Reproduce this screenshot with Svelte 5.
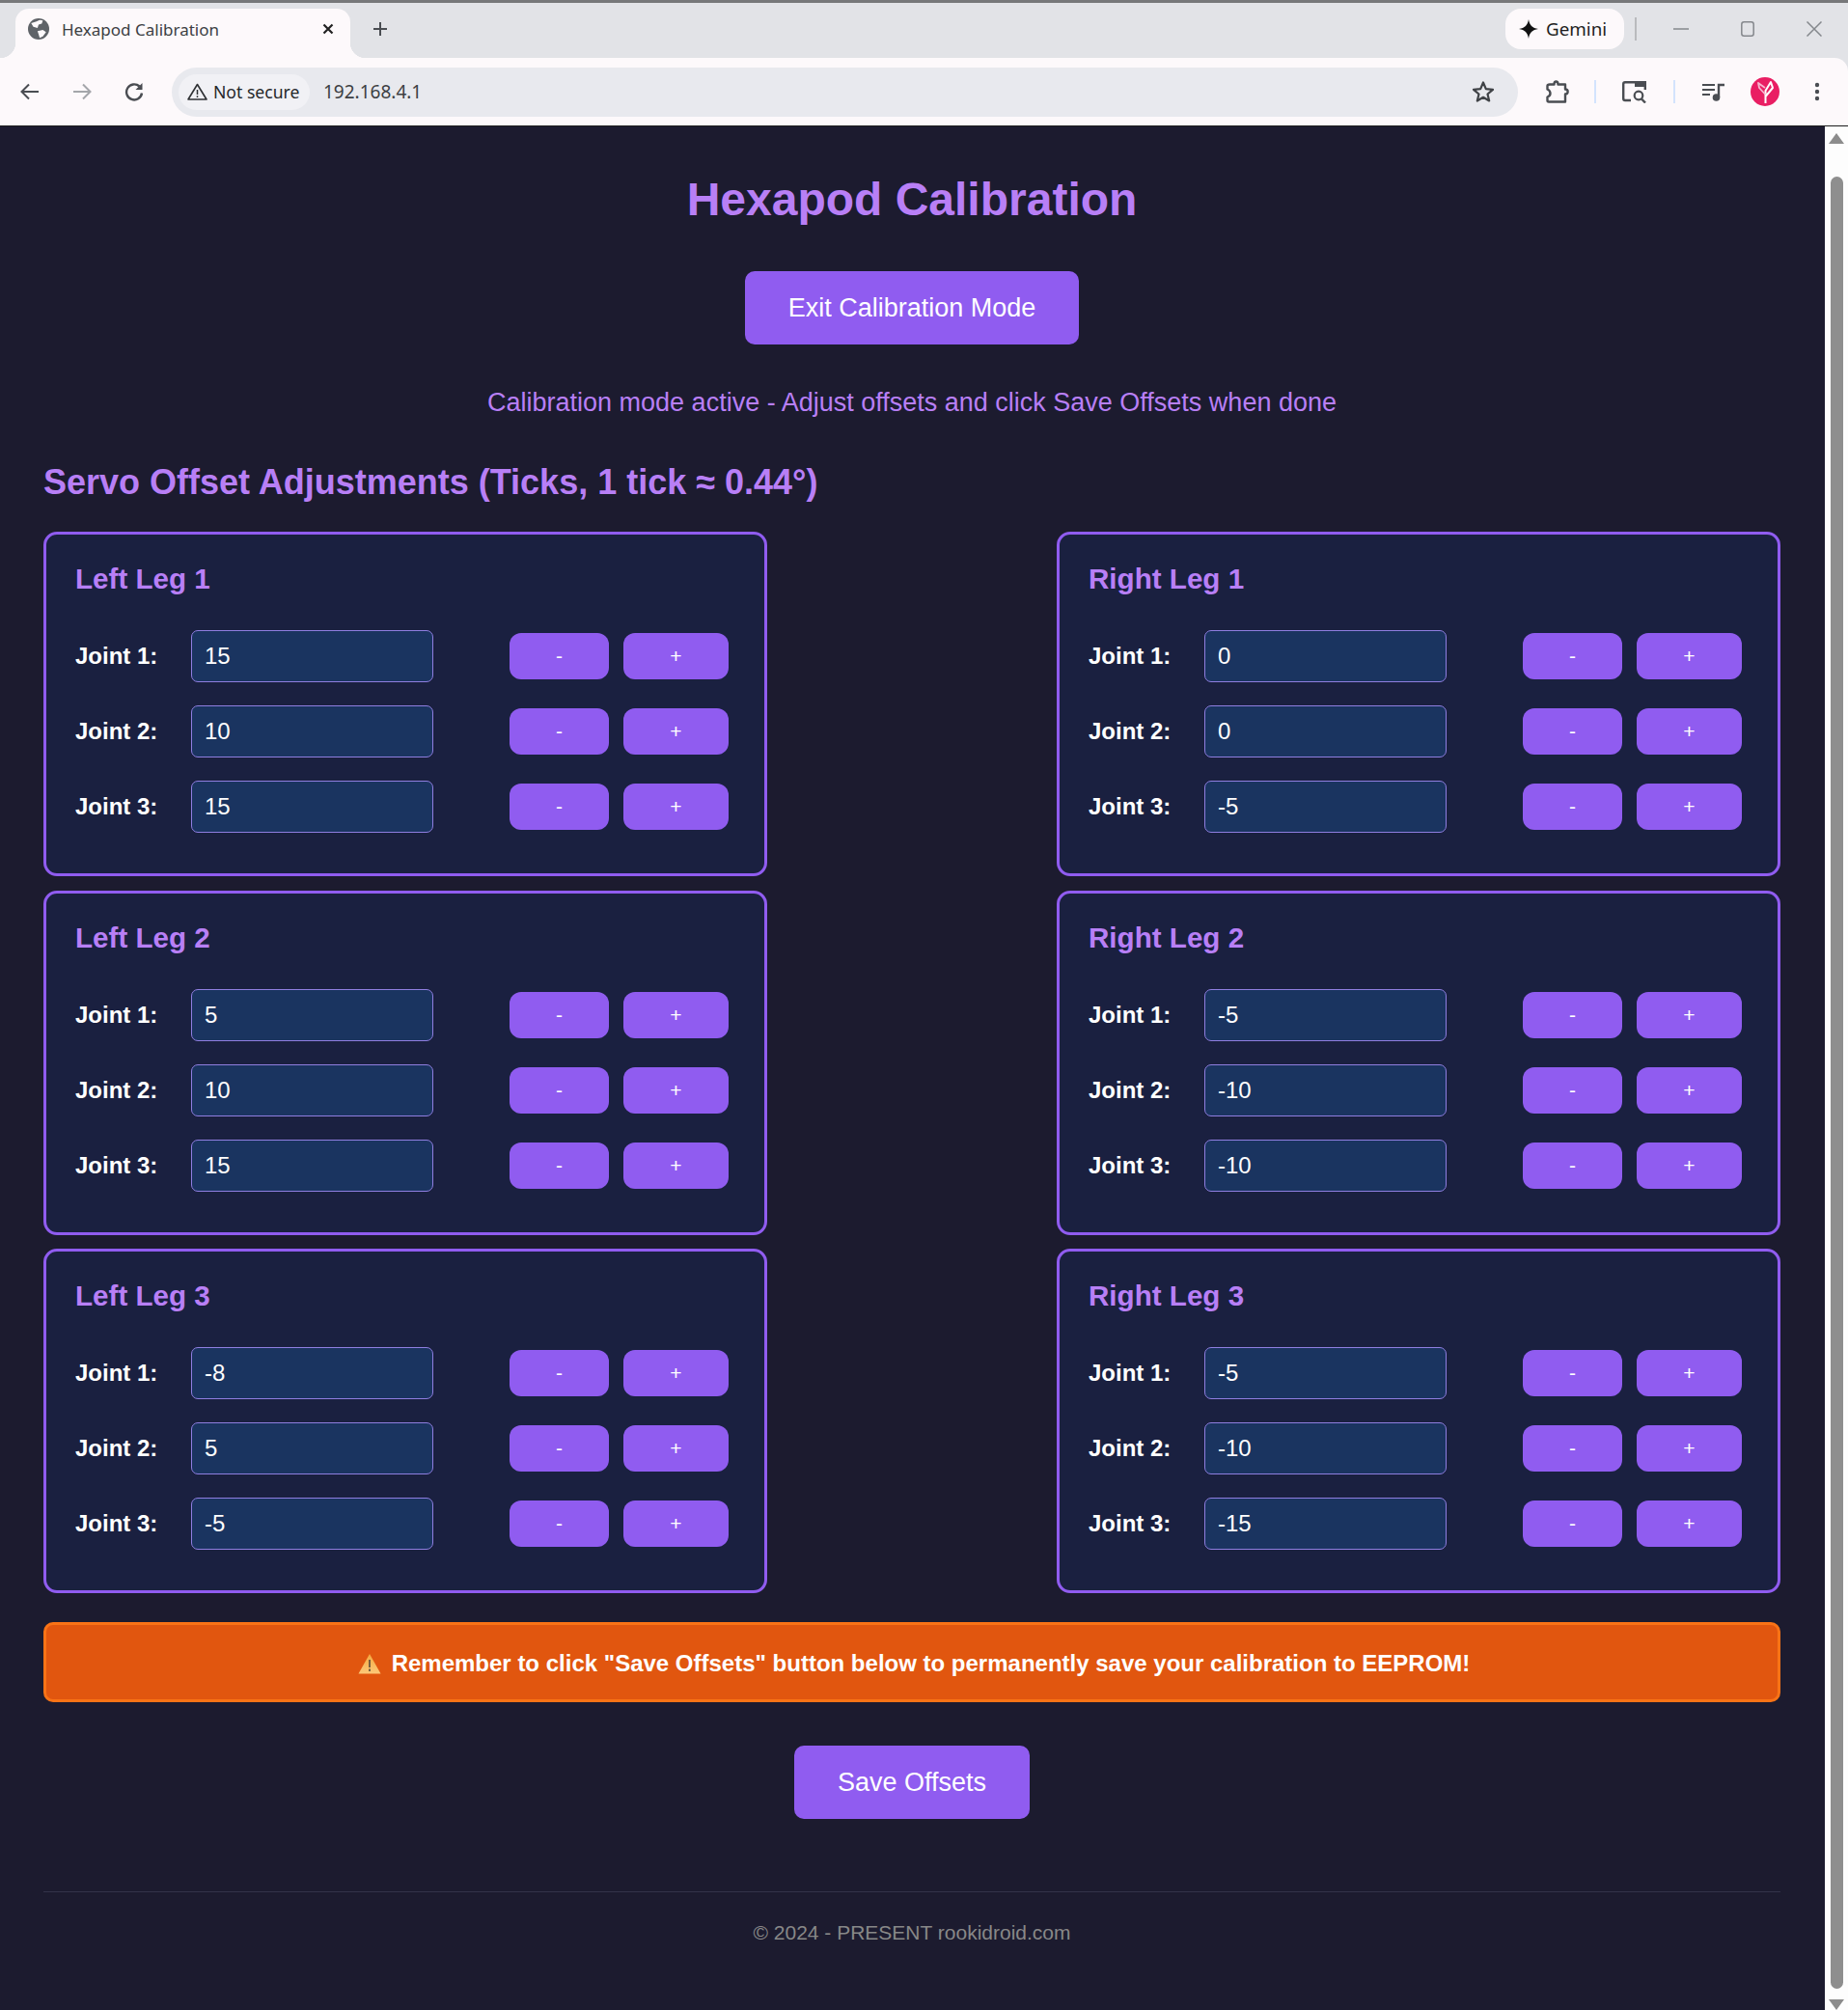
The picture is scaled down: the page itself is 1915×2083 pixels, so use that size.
<script>
  const legs = [
    { side: "Left", n: 1, vals: [15, 10, 15] },
    { side: "Right", n: 1, vals: [0, 0, -5] },
    { side: "Left", n: 2, vals: [5, 10, 15] },
    { side: "Right", n: 2, vals: [-5, -10, -10] },
    { side: "Left", n: 3, vals: [-8, 5, -5] },
    { side: "Right", n: 3, vals: [-5, -10, -15] }
  ];
</script>

<div class="window">
  <div class="topline"></div>
  <div class="tabstrip">
    <div class="tab">
      <svg class="globe" width="22" height="22" viewBox="0 0 20 20">
        <circle cx="10" cy="10" r="10" fill="#5f6368" />
        <path d="M3 4.5 L8 3 L11 1.5 L14 2 L13 5 L10 6 L9 9 L5 8 Z" fill="#fdf9fb" />
        <path d="M9 12 L14 11 L17 13 L14 17 L11 18.5 L10 15 Z" fill="#fdf9fb" />
      </svg>
      <span class="tabtitle">Hexapod Calibration</span>
      <svg class="tabclose" width="12" height="12" viewBox="0 0 12 12">
        <path d="M1.5 1.5 L10.5 10.5 M10.5 1.5 L1.5 10.5" stroke="#222" stroke-width="2.2" />
      </svg>
    </div>
    <svg class="newtab" width="16" height="16" viewBox="0 0 16 16">
      <path d="M8 1 V15 M1 8 H15" stroke="#4a4d52" stroke-width="2" />
    </svg>
    <div class="spacer"></div>
    <div class="gemini">
      <svg width="20" height="20" viewBox="0 0 20 20">
        <path d="M10 0 C10.8 6 14 9.2 20 10 C14 10.8 10.8 14 10 20 C9.2 14 6 10.8 0 10 C6 9.2 9.2 6 10 0 Z" fill="#111" />
      </svg>
      <span>Gemini</span>
    </div>
    <div class="stripsep"></div>
    <svg class="minimize" width="16" height="16" viewBox="0 0 16 16"><path d="M0 8 H16" stroke="#85888d" stroke-width="1.5" /></svg>
    <svg class="maximize" width="14" height="16" viewBox="0 0 14 16"><rect x="0.8" y="0.8" width="12.4" height="14.4" rx="2.5" fill="none" stroke="#85888d" stroke-width="1.5" /></svg>
    <svg class="winclose" width="16" height="16" viewBox="0 0 16 16"><path d="M0.5 0.5 L15.5 15.5 M15.5 0.5 L0.5 15.5" stroke="#85888d" stroke-width="1.5" /></svg>
  </div>

  <div class="toolbar">
    <svg class="back" width="20" height="18" viewBox="0 0 20 18"><path d="M19 9 H2 M9 1.5 L1.5 9 L9 16.5" fill="none" stroke="#4a4d52" stroke-width="2" /></svg>
    <svg class="forward" width="20" height="18" viewBox="0 0 20 18"><path d="M1 9 H18 M11 1.5 L18.5 9 L11 16.5" fill="none" stroke="#a4a6aa" stroke-width="2" /></svg>
    <svg class="reload" width="20" height="20" viewBox="0 0 20 20"><path d="M15.5 4.5 A8 8 0 1 0 18 11.5" fill="none" stroke="#4a4d52" stroke-width="2.4" /><path d="M18.5 1 V8 H11.5 Z" fill="#4a4d52" /></svg>
    <div class="omnibox">
      <div class="chip">
        <svg width="21" height="18" viewBox="0 0 21 18">
          <path d="M10.5 1.5 L20 17 H1 Z" fill="none" stroke="#2f3134" stroke-width="1.6" stroke-linejoin="round" />
          <path d="M10.5 7 V12 M10.5 13.2 V15" stroke="#2f3134" stroke-width="1.5" />
        </svg>
        <span>Not secure</span>
      </div>
      <span class="url">192.168.4.1</span>
      <div class="spacer"></div>
      <svg class="star" width="24" height="24" viewBox="0 0 24 24"><path d="M12 2.5 L14.8 9.2 L22 9.8 L16.5 14.5 L18.2 21.5 L12 17.8 L5.8 21.5 L7.5 14.5 L2 9.8 L9.2 9.2 Z" fill="none" stroke="#3f4246" stroke-width="2.2" stroke-linejoin="round" /></svg>
    </div>
    <svg class="ext" width="24" height="24" viewBox="0 0 24 24"><path d="M4 4.5 H8.5 C8.5 0.5 12.5 0.5 12.5 4.5 H20 V9.5 C23.5 9.5 23.5 14.5 20 14.5 V22.5 H3 C2 22.5 1.5 22 1.5 21 V17.5 C5.5 16 5.5 11.5 1.5 9.5 V6 C1.5 5 2.5 4.5 4 4.5 Z" fill="none" stroke="#4a4d52" stroke-width="2.4" stroke-linejoin="round" /></svg>
    <div class="toolsep"></div>
    <svg class="tabsearch" width="26" height="23" viewBox="0 0 26 23">
      <path d="M14 1.2 H3 Q1.2 1.2 1.2 3 V18 Q1.2 20 3 20 H9" fill="none" stroke="#4a4d52" stroke-width="2.4" />
      <path d="M13 0 H25 V6 H13 Z" fill="#4a4d52" />
      <path d="M23.8 6 V9" stroke="#4a4d52" stroke-width="2.4" />
      <circle cx="17" cy="15" r="4.3" fill="none" stroke="#4a4d52" stroke-width="2.2" />
      <path d="M20 18.5 L24 22.5" stroke="#4a4d52" stroke-width="2.4" />
    </svg>
    <div class="toolsep"></div>
    <svg class="media" width="23" height="19" viewBox="0 0 23 19">
      <path d="M0 2 H13 M0 7 H13 M0 12 H8" stroke="#4a4d52" stroke-width="2" />
      <path d="M17 15 V2 H23" fill="none" stroke="#4a4d52" stroke-width="2.4" />
      <circle cx="14.5" cy="15" r="3.8" fill="#4a4d52" />
    </svg>
    <div class="avatar">
      <svg width="22" height="26" viewBox="0 0 22 26">
        <path d="M11.5 25 V12 L17 3 L19 9 L11.5 18" fill="none" stroke="#fff" stroke-width="2" stroke-linejoin="round" />
        <path d="M11.5 16 L5 9 L4 4 L11 9" fill="none" stroke="#f7b6cf" stroke-width="1.8" stroke-linejoin="round" />
      </svg>
    </div>
    <svg class="dots" width="6" height="20" viewBox="0 0 6 20"><circle cx="3" cy="3" r="2.2" fill="#4a4d52" /><circle cx="3" cy="10" r="2.2" fill="#4a4d52" /><circle cx="3" cy="17" r="2.2" fill="#4a4d52" /></svg>
  </div>

  <div class="viewport">
    <main>
      <h1>Hexapod Calibration</h1>
      <div class="centered"><button class="big">Exit Calibration Mode</button></div>
      <p class="status">Calibration mode active - Adjust offsets and click Save Offsets when done</p>
      <h2>Servo Offset Adjustments (Ticks, 1 tick ≈ 0.44°)</h2>

      <div class="grid">
        {#each legs as leg}
          <section class="panel">
            <h3>{leg.side} Leg {leg.n}</h3>
            <div class="rows">
              {#each leg.vals as val, i}
                <div class="row">
                  <label for="{leg.side}-{leg.n}-{i}">Joint {i + 1}:</label>
                  <input id="{leg.side}-{leg.n}-{i}" type="text" value={val} />
                  <button class="small minus">-</button>
                  <button class="small plus">+</button>
                </div>
              {/each}
            </div>
          </section>
        {/each}
      </div>

      <div class="warning">
        <svg width="24" height="22" viewBox="0 0 24 22">
          <defs>
            <linearGradient id="warn" x1="0" y1="0" x2="0" y2="1">
              <stop offset="0" stop-color="#f5a93f" />
              <stop offset="1" stop-color="#fcc878" />
            </linearGradient>
          </defs>
          <path d="M12 1 L23.5 21.5 H0.5 Z" fill="url(#warn)" stroke-linejoin="round" />
          <path d="M12 7 V15 M12 16.5 V19" stroke="#5b4a3a" stroke-width="1.6" />
        </svg>
        <span>Remember to click "Save Offsets" button below to permanently save your calibration to EEPROM!</span>
      </div>

      <div class="centered save"><button class="big">Save Offsets</button></div>

      <footer>© 2024 - PRESENT rookidroid.com</footer>
    </main>

    <div class="scrollbar">
      <div class="arrow up"></div>
      <div class="thumb"></div>
      <div class="arrow down"></div>
    </div>
  </div>
</div>

<style>
  :global(body) {
    margin: 0;
    background: #1c1b2f;
  }

  .window {
    height: 2083px;
    overflow: hidden;
    display: flex;
    flex-direction: column;
    background: #e2e3e7;
    font-family: "Liberation Sans", Arial, sans-serif;
  }

  .topline {
    height: 3px;
    background: #77787a;
  }

  .tabstrip {
    height: 57px;
    background: #e2e3e7;
    display: flex;
    align-items: flex-start;
    padding-left: 16px;
    box-sizing: border-box;
  }

  .tab {
    position: relative;
    width: 347px;
    height: 51px;
    margin-top: 6px;
    background: #fdf9fb;
    border-radius: 14px 14px 0 0;
    display: flex;
    align-items: center;
    padding: 0 0 9px 13px;
    box-sizing: border-box;
    font-family: "Noto Sans", "Open Sans", sans-serif;
  }

  .tab::before,
  .tab::after {
    content: "";
    position: absolute;
    bottom: 0;
    width: 16px;
    height: 16px;
  }

  .tab::before {
    left: -16px;
    background: radial-gradient(circle at 0 0, transparent 16px, #fdf9fb 16.5px);
  }

  .tab::after {
    right: -16px;
    background: radial-gradient(circle at 100% 0, transparent 16px, #fdf9fb 16.5px);
  }

  .globe {
    flex: none;
  }

  .tabtitle {
    margin-left: 13px;
    font-size: 17px;
    color: #3c4043;
    white-space: nowrap;
  }

  .tabclose {
    margin-left: auto;
    margin-right: 17px;
  }

  .newtab {
    margin: 19px 0 0 23px;
  }

  .spacer {
    flex: 1;
  }

  .gemini {
    width: 123px;
    height: 42px;
    margin-top: 6px;
    background: #fdf9fb;
    border-radius: 16px;
    display: flex;
    align-items: center;
    gap: 8px;
    padding-left: 14px;
    box-sizing: border-box;
    font-family: "Noto Sans", "Open Sans", sans-serif;
    font-size: 18.8px;
    color: #1f1f1f;
  }

  .stripsep {
    width: 2px;
    height: 24px;
    margin: 15px 0 0 11px;
    background: #b9babd;
  }

  .minimize {
    margin: 19px 0 0 38px;
  }

  .maximize {
    margin: 19px 0 0 54px;
  }

  .winclose {
    margin: 19px 27px 0 54px;
  }

  .toolbar {
    height: 71px;
    background: #fdf9fb;
    border-bottom: 1px solid #1d1d1d;
    border-radius: 0 14px 0 0;
    display: flex;
    align-items: center;
    box-sizing: border-box;
  }

  .back {
    margin-left: 21px;
  }

  .forward {
    margin-left: 34px;
  }

  .reload {
    margin-left: 34px;
  }

  .omnibox {
    width: 1395px;
    height: 51px;
    margin-left: 29px;
    background: #e8e9ee;
    border-radius: 26px;
    display: flex;
    align-items: center;
    padding: 0 24px 0 7px;
    box-sizing: border-box;
    font-family: "Noto Sans", "Open Sans", sans-serif;
  }

  .chip {
    width: 136px;
    height: 37px;
    background: #f1f1f5;
    border-radius: 19px;
    display: flex;
    align-items: center;
    gap: 6px;
    padding-left: 9px;
    box-sizing: border-box;
    font-size: 17.6px;
    color: #26282b;
  }

  .url {
    margin-left: 14px;
    font-size: 19px;
    color: #3c4043;
  }

  .ext {
    margin-left: 29px;
  }

  .toolsep {
    width: 2px;
    height: 24px;
    background: #d3e3fd;
  }

  .ext + .toolsep {
    margin-left: 26px;
  }

  .tabsearch {
    margin: 0 27px;
  }

  .media {
    margin-left: 28px;
  }

  .avatar {
    width: 30px;
    height: 30px;
    margin-left: 27px;
    border-radius: 50%;
    background: #e91e63;
    display: flex;
    align-items: center;
    justify-content: center;
  }

  .dots {
    margin-left: 36px;
  }

  .viewport {
    flex: 1;
    display: flex;
    min-height: 0;
    background: #1c1b2f;
  }

  main {
    flex: 1;
    min-width: 0;
    padding: 48px 46px 0 45px;
    box-sizing: border-box;
  }

  h1 {
    margin: 0 0 47px;
    font-size: 48px;
    font-weight: 700;
    color: #b87ff6;
    text-align: center;
  }

  .centered {
    display: flex;
    justify-content: center;
  }

  button {
    font-family: inherit;
    background: #905cf0;
    color: #fff;
    border: none;
  }

  .big {
    height: 76px;
    padding: 0 45px;
    border-radius: 10px;
    font-size: 27px;
  }

  .status {
    margin: 45px 0 46px;
    font-size: 27px;
    color: #b87ff6;
    text-align: center;
  }

  h2 {
    margin: 0 0 30px;
    font-size: 36px;
    font-weight: 700;
    color: #b87ff6;
  }

  .grid {
    display: grid;
    grid-template-columns: 750px 750px;
    justify-content: space-between;
    row-gap: 14.5px;
  }

  .panel {
    height: 357px;
    border: 3px solid #905cf0;
    border-radius: 14px;
    background: #1a2040;
    padding: 29px 30px 0;
    box-sizing: border-box;
  }

  h3 {
    margin: 0 0 36px;
    font-size: 29.6px;
    font-weight: 700;
    color: #b87ff6;
  }

  .rows {
    display: flex;
    flex-direction: column;
    gap: 24px;
  }

  .row {
    display: flex;
    align-items: center;
    gap: 15px;
  }

  label {
    width: 105px;
    font-size: 24px;
    font-weight: 700;
    color: #fff;
  }

  input {
    width: 251px;
    height: 54px;
    margin-right: 64px;
    padding: 0 13px;
    box-sizing: border-box;
    background: #1a3460;
    border: 1px solid #8f7ee0;
    border-radius: 7px;
    font-family: inherit;
    font-size: 24px;
    color: #fff;
  }

  .small {
    height: 48px;
    padding: 0;
    border-radius: 12px;
    font-size: 21px;
  }

  .minus {
    width: 103px;
  }

  .plus {
    width: 109px;
  }

  .warning {
    height: 83px;
    margin-top: 30px;
    padding: 2px 0 0 4px;
    border: 3px solid #f97316;
    border-radius: 10px;
    background: #e1560f;
    display: flex;
    align-items: center;
    justify-content: center;
    gap: 11px;
    box-sizing: border-box;
    font-size: 24px;
    font-weight: 700;
    color: #fff;
  }

  .save {
    margin-top: 45px;
  }

  footer {
    margin-top: 75px;
    padding-top: 30px;
    border-top: 1px solid #33334a;
    font-size: 21px;
    color: #888;
    text-align: center;
  }

  .scrollbar {
    width: 24px;
    background: #fdfdfd;
    display: flex;
    flex-direction: column;
    align-items: center;
  }

  .arrow {
    width: 0;
    height: 0;
    border-left: 8px solid transparent;
    border-right: 8px solid transparent;
  }

  .up {
    margin-top: 7px;
    border-bottom: 11px solid #8c8c8c;
  }

  .down {
    margin-top: 11px;
    border-top: 11px solid #8c8c8c;
  }

  .thumb {
    width: 13px;
    flex: 1;
    margin-top: 34px;
    background: #8e8e8e;
    border-radius: 7px;
  }
</style>
